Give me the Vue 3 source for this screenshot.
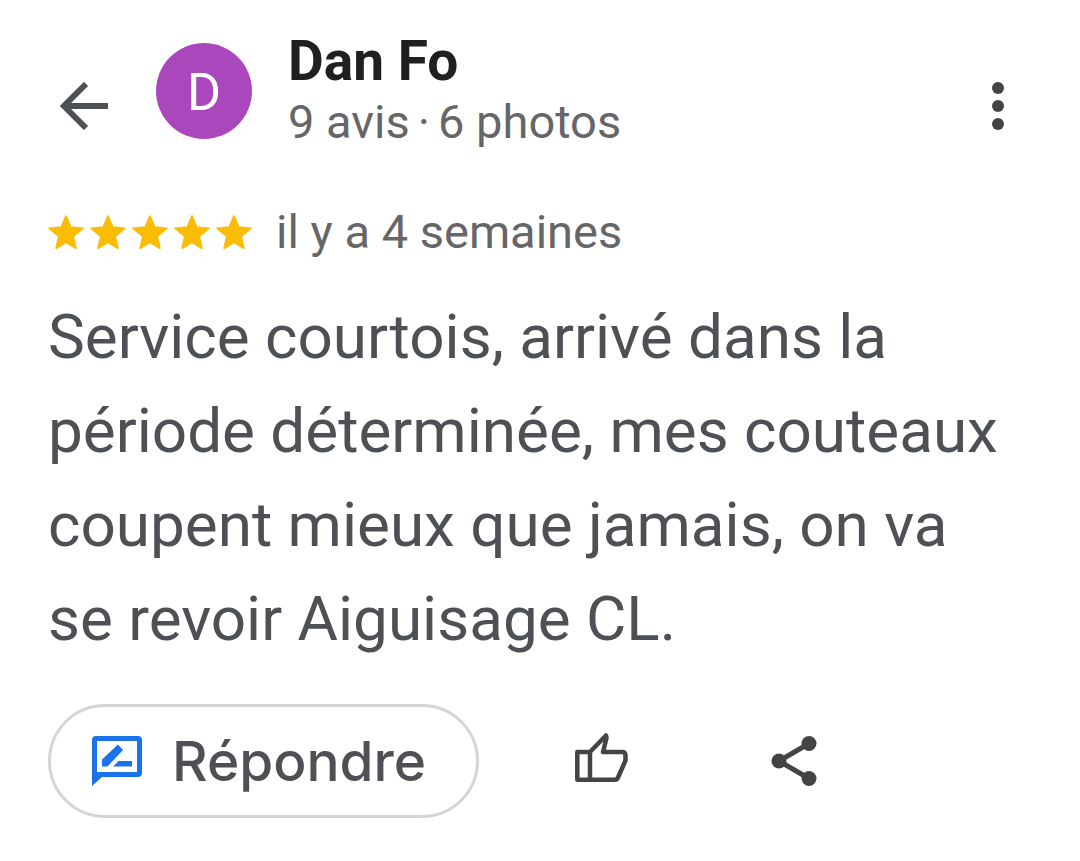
<script setup>
const review = {
  author: 'Dan Fo',
  initial: 'D',
  stats: ['9 avis', '·', '6 photos'],
  rating: 5,
  age: 'il y a 4 semaines',
  text: 'Service courtois, arrivé dans la période déterminée, mes couteaux coupent mieux que jamais, on va se revoir Aiguisage CL.',
}
</script>

<template>
  <main class="review">
    <header class="head">
      <button class="icon-btn back" type="button" aria-label="Retour">
        <svg viewBox="0 0 48 48" width="48" height="48" aria-hidden="true">
          <path d="M48 24H5M26 2L4 24l22 22" fill="none" stroke="currentColor" stroke-width="6" />
        </svg>
      </button>
      <div class="avatar" aria-hidden="true">{{ review.initial }}</div>
      <div class="who">
        <h1 class="name">{{ review.author }}</h1>
        <p class="stats">
          <span v-for="part in review.stats" :key="part">{{ part }}</span>
        </p>
      </div>
      <button class="icon-btn more" type="button" aria-label="Plus d'options">
        <svg viewBox="0 0 12 48" width="12" height="48" aria-hidden="true">
          <circle cx="6" cy="6" r="6" /><circle cx="6" cy="24" r="6" /><circle cx="6" cy="42" r="6" />
        </svg>
      </button>
    </header>

    <div class="meta">
      <div class="stars" role="img" aria-label="5 étoiles sur 5">
        <svg v-for="n in review.rating" :key="n" viewBox="2 2 20 19" width="36" height="34" aria-hidden="true">
          <path
            d="M12 17.270 17.500 20.500l-1.500-6.530L21.400 9.500l-6.800-.7L12 2.600 9.400 8.800 2.600 9.500l5.400 4.470L6.500 20.500z"
            stroke="currentColor"
            stroke-width="1"
            stroke-linejoin="round"
          />
        </svg>
      </div>
      <span class="age">{{ review.age }}</span>
    </div>

    <p class="text">{{ review.text }}</p>

    <footer class="actions">
      <button class="reply" type="button">
        <svg viewBox="0 0 50 50" width="50" height="50" aria-hidden="true">
          <path fill-rule="evenodd" d="M4 0H46Q50 0 50 4V37Q50 41 46 41H10L0 50V4Q0 0 4 0ZM5 5V36H45V5Z" />
          <path d="M10 23.500 26 8.500 31 14 15.500 30.500H10ZM21 30.500 26.500 25H40V30.500Z" />
        </svg>
        <span>Répondre</span>
      </button>
      <button class="icon-btn like" type="button" aria-label="J'aime">
        <svg viewBox="0 0 54 50" width="54" height="50" aria-hidden="true">
          <path
            d="M2.300 20H15V47.700H2.300ZM15 20 31 3.500 31.500 6 28 20H47Q50.500 20 50.500 23.500V28.500L43 45.500Q42 47.700 40 47.700H15"
            fill="none"
            stroke="currentColor"
            stroke-width="4.500"
            stroke-linejoin="round"
          />
        </svg>
      </button>
      <button class="icon-btn share" type="button" aria-label="Partager">
        <svg viewBox="3 2 18 20" width="46" height="50" aria-hidden="true">
          <path d="M18 5L6 12l12 7" fill="none" stroke="currentColor" stroke-width="2" />
          <circle cx="18" cy="5" r="3" /><circle cx="6" cy="12" r="3" /><circle cx="18" cy="19" r="3" />
        </svg>
      </button>
    </footer>
  </main>
</template>

<style>
body {
  margin: 0;
  background: #fff;
}
</style>

<style scoped>
.review {
  box-sizing: border-box;
  padding: 30px 48px 40px;
  font-family: Roboto, "Liberation Sans", sans-serif;
  color: #4d5055;
}
h1,
p {
  margin: 0;
}
button {
  font: inherit;
  padding: 0;
  border: 0;
  background: none;
  cursor: pointer;
}
svg {
  display: block;
  fill: currentColor;
}
.icon-btn {
  color: #444446;
}
.head {
  display: flex;
  align-items: center;
}
.back {
  margin: 30px 48px 0 12px;
  color: #4d5055;
}
.avatar {
  width: 96px;
  height: 96px;
  border-radius: 50%;
  background: #ab47bc;
  color: #fff;
  font-size: 52px;
  line-height: 100px;
  text-align: center;
}
.who {
  flex: 1;
  margin-left: 36px;
}
.name {
  font-size: 55px;
  line-height: 62px;
  font-weight: 700;
  color: #202020;
}
.stats {
  display: flex;
  gap: 8px;
  font-size: 47px;
  line-height: 60px;
  color: #666668;
}
.more {
  margin: 30px 28px 0 0;
}
.meta {
  display: flex;
  align-items: center;
  gap: 24px;
  margin-top: 50px;
}
.stars {
  display: flex;
  gap: 6px;
  color: #fbbc04;
}
.age {
  font-size: 47px;
  line-height: 60px;
  color: #666668;
}
.text {
  margin-top: 28px;
  padding-right: 24px;
  font-size: 62px;
  line-height: 94px;
}
.actions {
  display: flex;
  align-items: center;
  margin-top: 38px;
}
.reply {
  display: flex;
  align-items: center;
  gap: 30px;
  padding: 24px 50px 24px 41px;
  border: 3px solid #d5d5d5;
  border-radius: 57px;
  font-family: Inter, Roboto, sans-serif;
  font-size: 55px;
  line-height: 60px;
  font-weight: 500;
  color: #4d5055;
}
.reply svg {
  color: #1a73e8;
}
.like {
  margin: 0 142px 8px 96px;
}
</style>
